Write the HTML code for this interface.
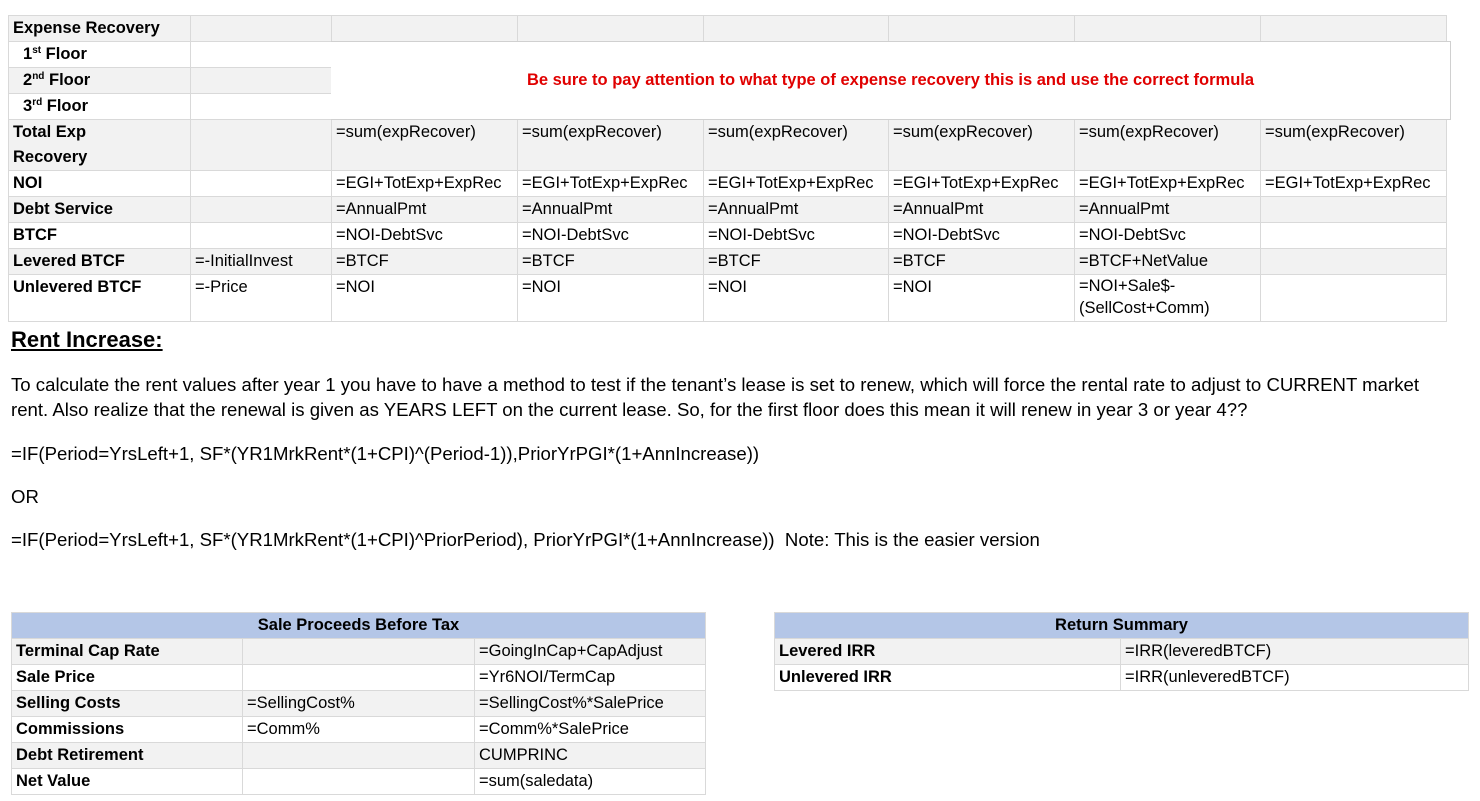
<!DOCTYPE html>
<html><head><meta charset="utf-8"><style>
*{margin:0;padding:0;box-sizing:border-box}
body{width:1480px;height:801px;background:#fff;font-family:"Liberation Sans",sans-serif;font-size:16.5px;color:#000;position:relative;overflow:hidden}
table{border-collapse:collapse;table-layout:fixed;position:absolute}
td{border:1px solid #d9d9d9;padding:0 0 0 4px;vertical-align:top;line-height:25px;white-space:nowrap;overflow:hidden}
tr.g td{background:#f2f2f2}
td.b{font-weight:bold}
td.i{padding-left:14px}
sup{font-size:10px;line-height:0;vertical-align:6px}
.p{position:absolute;left:11px;font-size:18.6px;line-height:25px;white-space:nowrap}
th{background:#b4c6e7;font-weight:bold;border:1px solid #d9d9d9;line-height:25px;font-weight:bold}
</style></head><body>
<table style="left:8px;top:15px;width:1438px">
<colgroup><col style="width:182px"><col style="width:141px"><col style="width:186px"><col style="width:186px"><col style="width:185px"><col style="width:186px"><col style="width:186px"><col style="width:186px"></colgroup>
<tr class="g"><td class="b">Expense Recovery</td><td></td><td></td><td></td><td></td><td></td><td></td><td></td></tr>
<tr><td class="b i">1<sup>st</sup> Floor</td><td></td><td colspan="6" rowspan="3" style="background:#fff;border-right:none"></td></tr>
<tr class="g"><td class="b i">2<sup>nd</sup> Floor</td><td></td></tr>
<tr><td class="b i">3<sup>rd</sup> Floor</td><td></td></tr>
<tr class="g"><td class="b">Total Exp<br>Recovery</td><td></td><td>=sum(expRecover)</td><td>=sum(expRecover)</td><td>=sum(expRecover)</td><td>=sum(expRecover)</td><td>=sum(expRecover)</td><td>=sum(expRecover)</td></tr>
<tr><td class="b">NOI</td><td></td><td>=EGI+TotExp+ExpRec</td><td>=EGI+TotExp+ExpRec</td><td>=EGI+TotExp+ExpRec</td><td>=EGI+TotExp+ExpRec</td><td>=EGI+TotExp+ExpRec</td><td>=EGI+TotExp+ExpRec</td></tr>
<tr class="g"><td class="b">Debt Service</td><td></td><td>=AnnualPmt</td><td>=AnnualPmt</td><td>=AnnualPmt</td><td>=AnnualPmt</td><td>=AnnualPmt</td><td></td></tr>
<tr><td class="b">BTCF</td><td></td><td>=NOI-DebtSvc</td><td>=NOI-DebtSvc</td><td>=NOI-DebtSvc</td><td>=NOI-DebtSvc</td><td>=NOI-DebtSvc</td><td></td></tr>
<tr class="g"><td class="b">Levered BTCF</td><td>=-InitialInvest</td><td>=BTCF</td><td>=BTCF</td><td>=BTCF</td><td>=BTCF</td><td>=BTCF+NetValue</td><td></td></tr>
<tr style="height:47px"><td class="b">Unlevered BTCF</td><td>=-Price</td><td>=NOI</td><td>=NOI</td><td>=NOI</td><td>=NOI</td><td style="line-height:22px;white-space:normal">=NOI+Sale$-<br>(SellCost+Comm)</td><td></td></tr>
</table>
<div style="position:absolute;left:331px;top:41px;width:1120px;height:79px;border:1px solid #d0d0d0;border-left:none;background:#fff;color:#e00000;font-weight:bold;font-size:16.5px;text-align:center;line-height:77px">Be sure to pay attention to what type of expense recovery this is and use the correct formula</div>

<div class="p" style="top:326px;font-size:22px;font-weight:bold;text-decoration:underline;line-height:28px">Rent Increase:</div>
<div class="p" style="top:372px">To calculate the rent values after year 1 you have to have a method to test if the tenant’s lease is set to renew, which will force the rental rate to adjust to CURRENT market</div>
<div class="p" style="top:397px">rent. Also realize that the renewal is given as YEARS LEFT on the current lease. So, for the first floor does this mean it will renew in year 3 or year 4??</div>
<div class="p" style="top:441px">=IF(Period=YrsLeft+1, SF*(YR1MrkRent*(1+CPI)^(Period-1)),PriorYrPGI*(1+AnnIncrease))</div>
<div class="p" style="top:484px">OR</div>
<div class="p" style="top:527px">=IF(Period=YrsLeft+1, SF*(YR1MrkRent*(1+CPI)^PriorPeriod), PriorYrPGI*(1+AnnIncrease))&nbsp; Note: This is the easier version</div>

<table style="left:11px;top:612px;width:694px">
<colgroup><col style="width:231px"><col style="width:232px"><col style="width:231px"></colgroup>
<tr><th colspan="3">Sale Proceeds Before Tax</th></tr>
<tr class="g"><td class="b">Terminal Cap Rate</td><td></td><td>=GoingInCap+CapAdjust</td></tr>
<tr><td class="b">Sale Price</td><td></td><td>=Yr6NOI/TermCap</td></tr>
<tr class="g"><td class="b">Selling Costs</td><td>=SellingCost%</td><td>=SellingCost%*SalePrice</td></tr>
<tr><td class="b">Commissions</td><td>=Comm%</td><td>=Comm%*SalePrice</td></tr>
<tr class="g"><td class="b">Debt Retirement</td><td></td><td>CUMPRINC</td></tr>
<tr><td class="b">Net Value</td><td></td><td>=sum(saledata)</td></tr>
</table>

<table style="left:774px;top:612px;width:694px">
<colgroup><col style="width:346px"><col style="width:348px"></colgroup>
<tr><th colspan="2">Return Summary</th></tr>
<tr class="g"><td class="b">Levered IRR</td><td>=IRR(leveredBTCF)</td></tr>
<tr><td class="b">Unlevered IRR</td><td>=IRR(unleveredBTCF)</td></tr>
</table>
</body></html>
